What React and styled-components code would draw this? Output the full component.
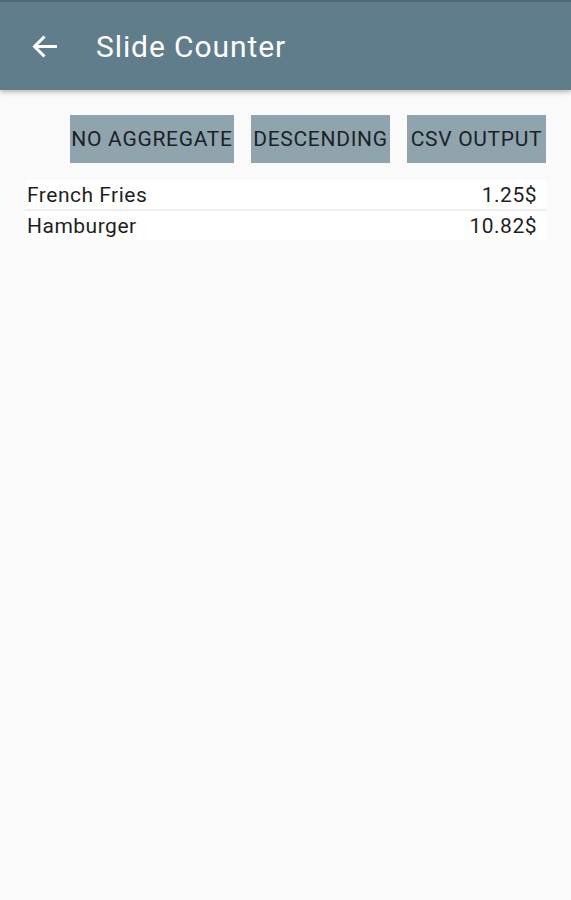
import React from "react";
import styled, { createGlobalStyle } from "styled-components";

const GlobalStyle = createGlobalStyle`
  html, body {
    margin: 0;
    padding: 0;
    background: #fafafa;
    font-family: Roboto, "Liberation Sans", sans-serif;
  }
`;

const Page = styled.div`
  width: 571px;
  min-height: 900px;
  background: #fafafa;
`;

const AppBar = styled.header`
  height: 90px;
  background: #607d8b;
  display: flex;
  align-items: center;
  box-shadow: 0 2px 5px rgba(0, 0, 0, 0.28);
  border-top: 2px solid #4e6877;
  box-sizing: border-box;
`;

const BackButton = styled.div`
  width: 26px;
  height: 24px;
  margin-left: 32px;
  display: flex;
  align-items: center;
  justify-content: center;
`;

const Title = styled.h1`
  margin: 0 0 0 38px;
  font-size: 30px;
  font-weight: 400;
  color: #ffffff;
  letter-spacing: 0.9px;
`;

const Content = styled.main`
  padding: 25px 24px 0 25px;
`;

const Toolbar = styled.div`
  display: flex;
  justify-content: flex-end;
  gap: 17px;
  padding-right: 1px;
`;

const ActionButton = styled.button`
  height: 48px;
  width: ${(p) => p.w}px;
  padding: 0;
  border: none;
  background: #90a4ae;
  color: #1b2226;
  font-family: Roboto, "Liberation Sans", sans-serif;
  font-size: 21px;
  font-weight: 400;
  letter-spacing: 0.7px;
  white-space: nowrap;
  display: flex;
  align-items: center;
  justify-content: center;
`;

const List = styled.div`
  margin-top: 17px;
  display: flex;
  flex-direction: column;
  gap: 2px;
  background: #eeeeee;
  width: 522px;
`;

const Row = styled.div`
  height: 29px;
  background: #ffffff;
  display: flex;
  align-items: center;
  justify-content: space-between;
  padding: 0 10px 0 2px;
  font-size: 21px;
  letter-spacing: 0.5px;
  color: #1f1f1f;
`;

const items = [
  { name: "French Fries", price: "1.25$" },
  { name: "Hamburger", price: "10.82$" },
];

export default function App() {
  return (
    <Page>
      <GlobalStyle />
      <AppBar>
        <BackButton>
          <svg width="26" height="23" viewBox="0 0 26 23" fill="none">
            <path
              d="M25 11.5H3M12.5 1.5L2.5 11.5L12.5 21.5"
              stroke="#ffffff"
              strokeWidth="3"
              strokeLinecap="butt"
              strokeLinejoin="miter"
            />
          </svg>
        </BackButton>
        <Title>Slide Counter</Title>
      </AppBar>
      <Content>
        <Toolbar>
          <ActionButton w={164}>NO AGGREGATE</ActionButton>
          <ActionButton w={139}>DESCENDING</ActionButton>
          <ActionButton w={139}>CSV OUTPUT</ActionButton>
        </Toolbar>
        <List>
          {items.map((it) => (
            <Row key={it.name}>
              <span>{it.name}</span>
              <span>{it.price}</span>
            </Row>
          ))}
        </List>
      </Content>
    </Page>
  );
}
